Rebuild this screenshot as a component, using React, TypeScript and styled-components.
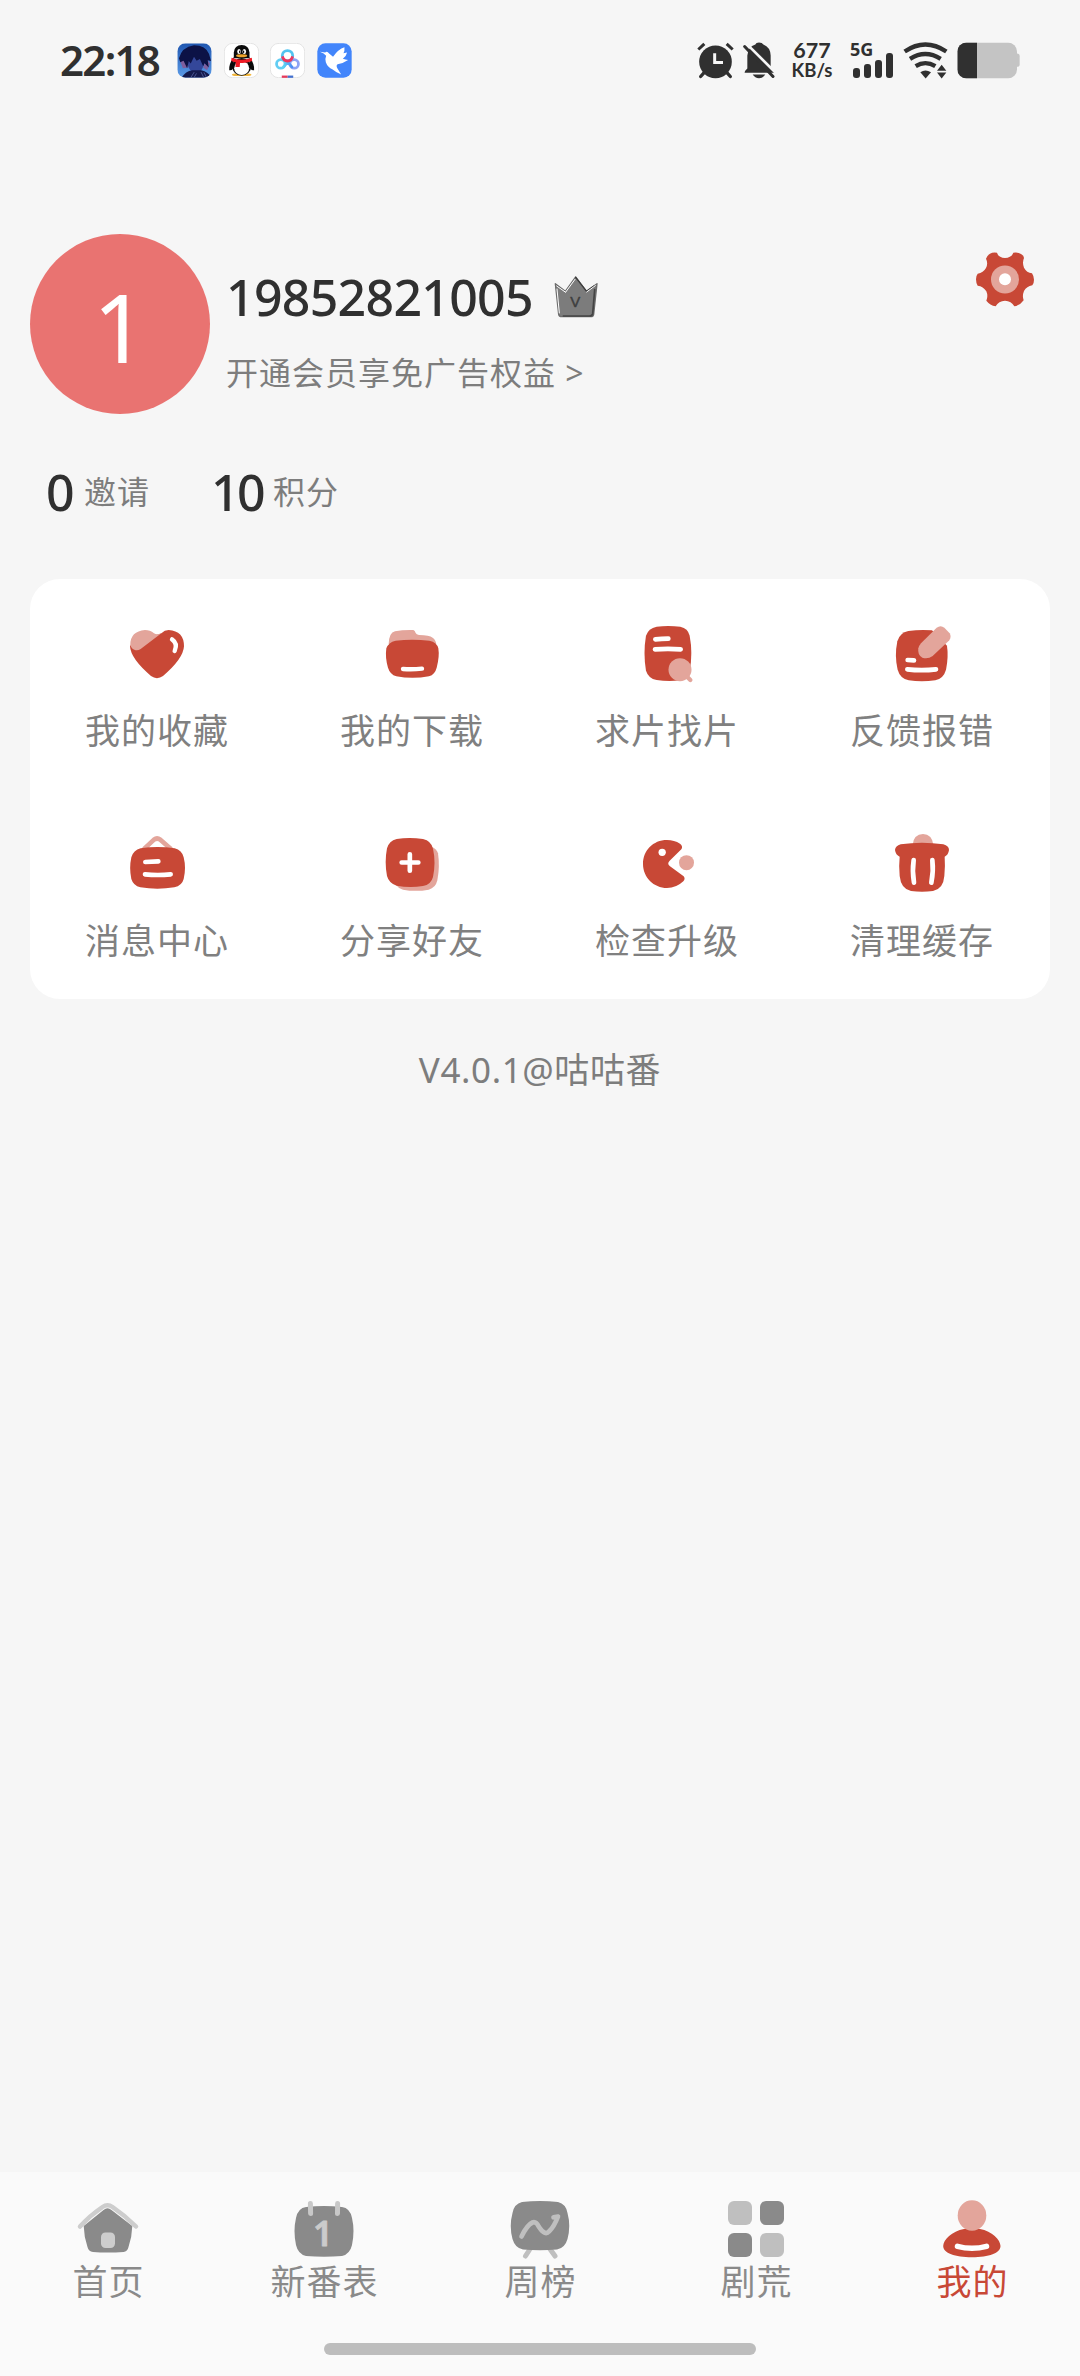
import React from "react";
import styled, { createGlobalStyle } from "styled-components";

const RED = "#c84836";
const PINK = "#e3a59b";
const INK = "#303030";
const GREY = "#7d7d7d";

const GlobalStyle = createGlobalStyle`
  * { box-sizing: border-box; }
  body {
    margin: 0;
    background: #f6f6f6;
    font-family: "Noto Sans", "Noto Sans CJK SC", sans-serif;
  }
  svg { display: block; flex: none; }
`;

const Screen = styled.div`
  width: 1080px;
  height: 2376px;
  display: flex;
  flex-direction: column;
  background: #f6f6f6;
  overflow: hidden;
`;

/* ---------- status bar ---------- */

const StatusBar = styled.header`
  height: 120px;
  padding: 0 60px;
  display: flex;
  align-items: center;
  justify-content: space-between;
  color: ${INK};
`;

const StatusSide = styled.div`
  display: flex;
  align-items: center;
`;

const Clock = styled.span`
  width: 117px;
  font-size: 42px;
  line-height: 50px;
  padding-bottom: 1px;
  font-weight: 600;
  letter-spacing: -1.7px;
  white-space: nowrap;
`;

const AppIcons = styled.div`
  display: flex;
  gap: 11.6px;
`;

const Speed = styled.div`
  width: 44px;
  margin-left: 15px;
  text-align: center;
  font-family: Lato, "Noto Sans", sans-serif;
  font-weight: 700;
  white-space: nowrap;
`;

const SpeedLine = styled.div<{ $size: number; $height: number }>`
  font-size: ${(p) => p.$size}px;
  line-height: ${(p) => p.$height}px;
`;

const Gap = styled.span<{ $w: number }>`
  width: ${(p) => p.$w}px;
  flex: none;
`;

/* ---------- profile ---------- */

const Profile = styled.section`
  height: 180px;
  margin-top: 114px;
  padding: 0 45px 0 30px;
  display: flex;
  align-items: flex-start;
`;

const Avatar = styled.div`
  width: 180px;
  height: 180px;
  border-radius: 50%;
  background: #e97371;
  color: #fff;
  font-size: 95px;
  line-height: 184px;
  text-align: center;
`;

const Identity = styled.div`
  flex: 1;
  padding: 33px 0 0 16px;
`;

const NameRow = styled.div`
  height: 60px;
  display: flex;
  align-items: center;
`;

const Name = styled.span`
  width: 326px;
  font-size: 50px;
  line-height: 60px;
  font-weight: 500;
  letter-spacing: -0.7px;
  color: ${INK};
`;

const Perk = styled.div`
  margin-top: 24px;
  font-size: 32px;
  line-height: 44px;
  letter-spacing: 1px;
  color: ${GREY};
  white-space: nowrap;
`;

const Settings = styled.div`
  margin-top: 17px;
`;

const Stats = styled.section`
  height: 165px;
  padding: 48px 0 0 46px;
  display: flex;
  align-items: flex-start;
`;

const Stat = styled.div<{ $w: number }>`
  width: ${(p) => p.$w}px;
  display: flex;
  align-items: center;
  height: 60px;
`;

const StatValue = styled.span<{ $w: number }>`
  width: ${(p) => p.$w}px;
  font-size: 50px;
  line-height: 60px;
  font-weight: 500;
  letter-spacing: -2.5px;
  color: ${INK};
`;

const StatLabel = styled.span`
  font-size: 32px;
  line-height: 44px;
  letter-spacing: 1px;
  color: ${GREY};
`;

/* ---------- menu card ---------- */

const Card = styled.section`
  margin: 0 30px;
  height: 420px;
  display: grid;
  grid-template-columns: repeat(4, 1fr);
  grid-template-rows: repeat(2, 210px);
  background: #fff;
  border-radius: 30px;
`;

const MenuItem = styled.div`
  padding: 43px 0 0 95px;
`;

const MenuLabel = styled.div`
  width: 160px;
  margin: 21px 0 0 -48px;
  text-align: center;
  font-size: 35px;
  line-height: 48px;
  letter-spacing: 1px;
  color: #808080;
  white-space: nowrap;
`;

const Version = styled.footer`
  margin-top: 46px;
  flex: 1;
  text-align: center;
  font-size: 35px;
  line-height: 50px;
  letter-spacing: 0.6px;
  color: #7d7d7d;
`;

/* ---------- bottom navigation ---------- */

const BottomNav = styled.nav`
  height: 204px;
  background: #fafafa;
  display: grid;
  grid-template-columns: repeat(5, 1fr);
  grid-template-rows: 171px 12px;
`;

const Tab = styled.div`
  padding-top: 24px;
  display: flex;
  flex-direction: column;
  align-items: center;
`;

const TabLabel = styled.span<{ $active?: boolean }>`
  margin-top: -2px;
  padding-left: 1px;
  font-size: 35px;
  line-height: 48px;
  letter-spacing: 1px;
  color: ${(p) => (p.$active ? RED : "#8a8a8a")};
`;

const HomeBar = styled.div`
  grid-column: 1 / -1;
  justify-self: center;
  width: 432px;
  height: 12px;
  border-radius: 6px;
  background: #bdbdbd;
`;

/* ---------- drawings ---------- */

type ArtProps = { box: string; w: number; h: number; children: React.ReactNode };
const Art = ({ box, w, h, children }: ArtProps) => (
  <svg width={w} height={h} viewBox={box} fill="none" strokeLinecap="round" strokeLinejoin="round">
    {children}
  </svg>
);

const PortraitApp = () => (
  <Art box="410 65 107 107" w={35} h={35}>
    <defs>
      <linearGradient id="sky" x1="0" y1="0" x2="0" y2="1">
        <stop offset="0" stopColor="#1f56b0" />
        <stop offset="1" stopColor="#5c9ce8" />
      </linearGradient>
      <clipPath id="tile"><rect x="411" y="66" width="105" height="105" rx="25" /></clipPath>
    </defs>
    <g clipPath="url(#tile)">
      <rect x="411" y="66" width="105" height="105" fill="url(#sky)" />
      <path d="M418 116 L428 142 L444 140 L440 112Z M500 112 L511 128 L502 148 L490 140Z" fill="#7f5f9e" />
      <path d="M441 112 Q440 142 457 154 L480 154 Q494 140 494 112 L460 98Z" fill="#34479a" />
      <path d="M424 171 Q436 151 457 148 L484 148 Q506 153 516 171Z" fill="#141a4d" />
      <path d="M416 112 Q424 78 462 72 Q498 72 508 99 L514 120 L504 118 L507 140 L494 127 L490 136 L480 114 L470 119 L462 107 L452 128 L446 120 L441 142 L430 119 L420 124Z" fill="#0c1246" />
      <path d="M452 171 L462 155 M462 171 L469 159 M492 171 L484 155 M501 171 L493 156" stroke="#6674b5" strokeWidth="2" />
    </g>
  </Art>
);

const PenguinApp = () => (
  <Art box="550 65 107 107" w={35} h={35}>
    <rect x="551" y="66" width="105" height="105" rx="25" fill="#fff" stroke="#e3e3e3" strokeWidth="3" />
    <ellipse cx="590" cy="162" rx="16" ry="4" fill="#f0b53c" />
    <ellipse cx="618" cy="162" rx="16" ry="4" fill="#f0b53c" />
    <path d="M580 108 Q564 130 566 148 Q574 150 580 140Z M628 108 Q644 130 642 148 Q634 150 628 140Z" fill="#0b0b0b" />
    <ellipse cx="604" cy="138" rx="29" ry="27" fill="#0b0b0b" />
    <ellipse cx="604" cy="142" rx="23" ry="21" fill="#fff" />
    <path d="M580 112 V94 Q582 71 604 71 Q626 71 628 94 V112Z" fill="#0b0b0b" />
    <ellipse cx="596" cy="91" rx="5.5" ry="8" fill="#fff" />
    <ellipse cx="612" cy="91" rx="5.5" ry="8" fill="#fff" />
    <ellipse cx="598" cy="92" rx="2" ry="4" fill="#000" />
    <ellipse cx="610" cy="92" rx="2" ry="4" fill="#000" />
    <ellipse cx="604" cy="104" rx="17" ry="4.5" fill="#efa52b" />
    <path d="M573 110 Q604 122 635 110 L636 120 Q618 128 599 126 L598 138 H585 L586 124 Q577 122 572 119Z" fill="#ef1c26" />
  </Art>
);

const CloudApp = () => (
  <Art box="690 65 107 107" w={35} h={35}>
    <defs>
      <linearGradient id="loop" x1="0" y1="0" x2="1" y2="0">
        <stop offset="0" stopColor="#5bd4f4" />
        <stop offset="1" stopColor="#4d8df3" />
      </linearGradient>
    </defs>
    <rect x="691" y="66" width="105" height="105" rx="25" fill="#fff" stroke="#e3e3e3" strokeWidth="3" />
    <circle cx="723" cy="129" r="13" stroke="#62cdf3" strokeWidth="8.5" />
    <circle cx="764" cy="129" r="13" stroke="#8da3f5" strokeWidth="8.5" />
    <path d="M731 138 L744 124 L757 138" stroke="url(#loop)" strokeWidth="8.5" />
    <circle cx="743.500" cy="104" r="16" stroke="#52c4f0" strokeWidth="8.5" />
    <path d="M728 106 Q731 120 744 120 Q756 120 759 106" stroke="#ed3860" strokeWidth="8.5" strokeLinecap="butt" />
    <path d="M726 168 H744" stroke="#e63a5b" strokeWidth="7" strokeLinecap="butt" />
    <path d="M744 168 H761" stroke="#4471cf" strokeWidth="7" strokeLinecap="butt" />
  </Art>
);

const BirdApp = () => (
  <Art box="830 65 107 107" w={35} h={35}>
    <rect x="831" y="66" width="105" height="105" rx="25" fill="#4285fb" />
    <path d="M839 92 L855 94 Q861 89 867 97 L879 107 Q895 84 914 78 Q915 90 911 96 Q919 95 922 94 Q919 107 909 113 Q917 116 925 117 Q911 127 893 130 Q887 134 893 144 L904 161 Q888 155 878 146 Q862 139 857 124 Q854 113 858 104 Q852 97 839 92Z" fill="#fff" />
  </Art>
);

const Alarm = () => (
  <Art box="54 65 111 110" w={37} h={37}>
    <circle cx="109.500" cy="124" r="49" fill={INK} />
    <path d="M58 87 L76 70 M161 87 L143 70" stroke={INK} strokeWidth="9" strokeLinecap="butt" />
    <path d="M74 158 L65 168 M145 158 L154 168" stroke={INK} strokeWidth="10" />
    <path d="M107 98 V126 H132" stroke="#f6f6f6" strokeWidth="9" strokeLinecap="butt" strokeLinejoin="miter" />
  </Art>
);

const BellOff = () => (
  <Art box="191 65 96 110" w={32} h={37}>
    <path d="M196 157 Q195 152 204 144 V105 Q206 78 228 72 Q230 66 239 66 Q249 66 252 72 Q273 80 274 105 V142 Q285 151 284 157Z" fill={INK} />
    <path d="M220 162 H258 Q251 173 239 173 Q227 173 220 162Z" fill={INK} />
    <path d="M202 70 L292 160" stroke="#f6f6f6" strokeWidth="8" />
    <path d="M196 78 L281 168" stroke={INK} strokeWidth="9" />
  </Art>
);

const SignalArea = styled.div`
  width: 43px;
  margin-left: 16px;
  height: 36px;
  display: grid;
`;

const NetType = styled.span`
  grid-area: 1 / 1;
  font-size: 18px;
  line-height: 14px;
  font-weight: 700;
`;

const SignalBars = styled.div`
  grid-area: 1 / 1;
  padding-left: 3px;
  display: flex;
  align-items: flex-end;
  gap: 4.300px;
`;

const Bar = styled.i<{ $h: number }>`
  width: 6.700px;
  height: ${(p) => p.$h}px;
  border-radius: 3px;
  background: ${INK};
`;

const Wifi = () => (
  <Art box="669 65 135 110" w={45} h={37}>
    <path d="M674 93 Q736 51 799 93" stroke={INK} strokeWidth="13" strokeLinecap="butt" />
    <path d="M690 115 Q736 86 782 115" stroke={INK} strokeWidth="13" strokeLinecap="butt" />
    <path d="M707 137 Q736 119 766 137" stroke={INK} strokeWidth="13" strokeLinecap="butt" />
    <path d="M721 155 Q736 145 753 155 L737 174Z" fill={INK} />
    <path d="M771 151 L785 133 L799 151Z M771 156 H799 L785 174Z" fill={INK} />
  </Art>
);

const Battery = () => (
  <Art box="831 65 189 110" w={63} h={37}>
    <defs><clipPath id="cell"><rect x="832" y="66" width="179" height="108" rx="27" /></clipPath></defs>
    <rect x="1000" y="99" width="19" height="40" rx="8" fill="#c4c4c4" />
    <g clipPath="url(#cell)">
      <rect x="832" y="66" width="179" height="108" fill="#c4c4c4" />
      <rect x="832" y="66" width="59" height="108" fill={INK} />
    </g>
  </Art>
);

const Crown = () => (
  <Art box="24 24 141 132" w={47} h={44}>
    <path d="M34 50 L64 73 L95 30 L127 73 L159 50 L149 142 Q148 149 140 149 H54 Q45 149 44 142Z" fill="#7c7c7c" stroke="#6c6c6c" strokeWidth="4" />
    <path d="M95 31 L128 73 L150 57" stroke="#3c3c3c" strokeWidth="4" />
    <path d="M152 68 L146 140 Q144 147 136 147 H58" stroke="#444" strokeWidth="5" />
    <path d="M66 74 L93 37 M128 75 L154 56" stroke="#fff" strokeWidth="3" />
    <path d="M38 57 L65 76 M39 66 L46 138" stroke="#fff" strokeWidth="3" />
    <text x="94" y="121" textAnchor="middle" fontFamily="Liberation Sans, sans-serif" fontSize="45" fill="#3e3e3e" stroke="#3e3e3e" strokeWidth="1.500">V</text>
  </Art>
);

const Gear = () => (
  <Art box="105 62 180 172" w={60} h={57.33}>
    <path d="M150 70 Q158 65 171 67 Q175 82 195 83 Q215 82 220 67 Q234 65 243 71 Q252 76 252 83 Q246 97 252 112 Q260 127 276 129 Q282 138 282 148 Q282 159 277 165 Q260 168 252 182 Q246 197 251 210 Q242 224 223 228 Q214 212 195 211 Q176 212 167 228 Q150 225 139 211 Q145 197 139 183 Q130 168 113 166 Q108 158 108 147 Q108 136 113 130 Q130 127 138 113 Q145 99 138 85 Q141 76 150 70Z" fill={RED} />
    <circle cx="195" cy="147.500" r="42" fill={PINK} />
    <circle cx="195" cy="147" r="18" fill="#fff" />
  </Art>
);

const Heart = () => (
  <Art box="315 156 195 192" w={65} h={64}>
    <path d="M424 190 Q434 180 446 180 Q492 183 492 229 Q490 266 429 318 Q411 331 393 318 Q332 266 330 229 L334 222Z" fill={RED} />
    <path d="M331 224 Q331 184 375 180 Q390 180 402 190 Q411 196 424 190 L362 237 Q352 243 343 239 Q333 235 331 224Z" fill={PINK} />
    <path d="M456 208 Q474 220 464 243" stroke="#fff" strokeWidth="13" />
  </Art>
);

const Folder = () => (
  <Art box="1080 156 195 192" w={65} h={64}>
    <path d="M1106 222 Q1107 188 1125 184 Q1150 179 1180 180 Q1185 182 1187 189 Q1189 194 1197 195 Q1228 196 1238 203 Q1248 210 1249 224Z" fill={PINK} />
    <path d="M1127 212 Q1176 206 1228 212 Q1251 217 1255 235 Q1259 260 1250 293 Q1245 313 1227 319 Q1177 328 1129 319 Q1110 313 1104 293 Q1095 263 1099 235 Q1105 217 1127 212Z" fill={RED} />
    <path d="M1149 297 Q1177 299 1206 296" stroke="#fff" strokeWidth="13" />
  </Art>
);

const FindDoc = () => (
  <Art box="285 156 195 192" w={65} h={64}>
    <path d="M350 170 Q384 166 421 170 Q444 175 449 197 Q459 250 449 303 Q444 326 421 331 Q384 335 350 330 Q325 325 318 302 Q309 250 318 197 Q325 175 350 170Z" fill={RED} />
    <circle cx="420" cy="299" r="34.500" fill={PINK} />
    <path d="M443 322 L451 330" stroke={PINK} strokeWidth="13" />
    <path d="M346 208 Q365 206 385 206 M345 238 Q384 235 422 238" stroke="#fff" strokeWidth="14" />
  </Art>
);

const EditNote = () => (
  <Art box="1050 156 195 192" w={65} h={64}>
    <path d="M1105 183 Q1140 178 1176 181 L1221 227 Q1226 260 1218 299 Q1211 325 1186 331 Q1145 337 1106 331 Q1080 325 1073 299 Q1063 258 1072 214 Q1079 188 1105 183Z" fill={RED} />
    <path d="M1190 173 Q1202 164 1213 173 L1229 190 Q1235 200 1228 211 L1178 258 Q1164 268 1147 263 Q1132 255 1135 235 Q1137 227 1143 220Z" fill={PINK} />
    <path d="M1103 270 L1122 271 M1102 298 Q1145 303 1188 298" stroke="#fff" strokeWidth="14" />
  </Art>
);

const Message = () => (
  <Art box="315 66 195 192" w={65} h={64}>
    <path d="M373 116 L402 89 Q411 82 421 89 L452 116" stroke={PINK} strokeWidth="14" />
    <path d="M362 115 Q412 107 464 115 Q486 121 491 142 Q499 174 491 207 Q486 227 463 232 Q412 240 361 232 Q340 227 334 207 Q327 174 334 142 Q340 121 362 115Z" fill={RED} />
    <path d="M376 156 L415 154 M375 193 Q413 197 452 193" stroke="#fff" strokeWidth="14" />
  </Art>
);

const Share = () => (
  <Art box="1080 66 195 192" w={65} h={64}>
    <path d="M1235 110 Q1250 116 1254 130 Q1260 170 1252 211 Q1247 234 1226 239 Q1187 246 1149 239 Q1136 236 1128 225Z" fill={PINK} />
    <path d="M1130 87 Q1168 81 1209 87 Q1234 93 1239 116 Q1248 157 1239 201 Q1233 224 1209 228 Q1168 234 1130 227 Q1107 220 1101 198 Q1093 157 1101 115 Q1107 93 1130 87Z" fill={RED} />
    <path d="M1145 157.500 H1195 M1169.500 133 V182" stroke="#fff" strokeWidth="14" />
  </Art>
);

const Upgrade = () => (
  <Art box="285 66 195 192" w={65} h={64}>
    <path d="M420 101 Q403 90 381 90 C339 90 309 122 309 162 C309 202 341 234 381 234 Q409 234 430 214 Q437 206 431 199 L390 169 Q380 161 389 152 L424 118 Q430 109 420 101Z" fill={RED} />
    <circle cx="366.500" cy="127" r="11" fill="#fff" />
    <circle cx="439.500" cy="158" r="22.500" fill={PINK} />
  </Art>
);

const Trash = () => (
  <Art box="1050 66 195 192" w={65} h={64}>
    <path d="M1118 104 Q1121 73 1149 72 Q1176 73 1180 104Z" fill={PINK} />
    <path d="M1082 103 Q1146 94 1210 103 Q1227 108 1227 120 Q1225 135 1214 140 Q1216 168 1213 198 Q1210 237 1179 243 Q1146 247 1113 243 Q1083 237 1079 198 Q1076 168 1079 140 Q1067 135 1065 120 Q1066 108 1082 103Z" fill={RED} />
    <path d="M1121 150 Q1116 184 1122 218 M1177 150 Q1181 184 1174 218" stroke="#fff" strokeWidth="14" />
  </Art>
);

const Home = () => (
  <Art box="0 0 66 64" w={66} h={64}>
    <path d="M28.500 14 Q32.500 10.500 36.500 14 L57.300 30 Q57 41 53.500 51 Q52.500 55.500 48.500 56 Q32.500 57 18 56 Q13.500 55.500 12.500 51 Q9 41 8.700 30Z" fill="#8a8a8a" />
    <path d="M5 30.500 Q15 19.500 27.500 11 Q32.500 7.500 37.500 11 Q50 19.500 61 30.500" stroke="#cdcdcd" strokeWidth="4.500" />
    <rect x="26" y="36.500" width="14" height="15.500" rx="4.500" fill="#cdcdcd" />
  </Art>
);

const Calendar = () => (
  <Art box="0 0 66 64" w={66} h={64}>
    <path d="M15 11 Q33 9 51 11 Q59 12 61 22 Q64 35 61 49 Q59 58 51 60 Q33 61.500 15 60 Q7 58 5 49 Q2 35 5 22 Q7 12 15 11Z" fill="#8a8a8a" />
    <path d="M19.400 7.500 L19.600 17.500 M46.600 7.500 L46.500 17.500" stroke="#c8c8c8" strokeWidth="5" />
    <text x="32" y="49.500" textAnchor="middle" fontSize="35" fontWeight="600" fill="#cbcbcb" stroke="#cbcbcb" strokeWidth="0.800">1</text>
  </Art>
);

const Board = () => (
  <Art box="0 0 66 64" w={66} h={64}>
    <path d="M23 53 L18.500 60 M43 53 L48 60" stroke="#bfbfbf" strokeWidth="5" />
    <path d="M15 6 Q33 4 51 6 Q59 8 60.500 17 Q64 30 60.500 43 Q58 52 50 53.500 Q33 55 16 53.500 Q8 52 5.500 43 Q2 30 5.500 17 Q7 8 15 6Z" fill="#8a8a8a" />
    <path d="M14.500 40.500 Q20 29 25.500 26.500 Q29 25 32 31 Q38 40 42 35.500 Q47 31 51 20.500 L46.500 21.300" stroke="#bfbfbf" strokeWidth="4.700" />
  </Art>
);

const GridIcon = () => (
  <Art box="0 0 66 64" w={66} h={64}>
    <rect x="5" y="5" width="24" height="24" rx="6" fill="#bfbfbf" />
    <rect x="37" y="5" width="24" height="24" rx="6" fill="#8a8a8a" />
    <rect x="5" y="37" width="24" height="24" rx="6" fill="#8a8a8a" />
    <rect x="37" y="37" width="24" height="24" rx="6" fill="#bfbfbf" />
  </Art>
);

const Person = () => (
  <Art box="0 0 66 64" w={66} h={64}>
    <path d="M25 33 Q33 31.500 41 33 C53 35 61.500 44 61.500 50 C61.500 57 50 61.300 33 61.300 C16 61.300 4.200 57 4.200 50 C4.200 44 13 35 25 33Z" fill={RED} />
    <ellipse cx="33" cy="19.500" rx="14.300" ry="15.200" fill={PINK} />
    <path d="M18.500 50.300 Q33 54.300 47.500 50.300" stroke="#fff" strokeWidth="5.500" />
  </Art>
);

const menu: [string, React.FC][] = [
  ["我的收藏", Heart],
  ["我的下载", Folder],
  ["求片找片", FindDoc],
  ["反馈报错", EditNote],
  ["消息中心", Message],
  ["分享好友", Share],
  ["检查升级", Upgrade],
  ["清理缓存", Trash],
];

const tabs: [string, React.FC][] = [
  ["首页", Home],
  ["新番表", Calendar],
  ["周榜", Board],
  ["剧荒", GridIcon],
  ["我的", Person],
];

export default function App() {
  return (
    <>
      <GlobalStyle />
      <Screen>
        <StatusBar>
          <StatusSide>
            <Clock>22:18</Clock>
            <AppIcons>
              <PortraitApp />
              <PenguinApp />
              <CloudApp />
              <BirdApp />
            </AppIcons>
          </StatusSide>
          <StatusSide>
            <Alarm />
            <Gap $w={9} />
            <BellOff />
            <Speed>
              <SpeedLine $size={21.5} $height={19}>677</SpeedLine>
              <SpeedLine $size={18.5} $height={20}>KB/s</SpeedLine>
            </Speed>
            <SignalArea>
              <NetType>5G</NetType>
              <SignalBars>
                <Bar $h={10} />
                <Bar $h={14} />
                <Bar $h={18} />
                <Bar $h={25} />
              </SignalBars>
            </SignalArea>
            <Gap $w={10} />
            <Wifi />
            <Gap $w={9} />
            <Battery />
          </StatusSide>
        </StatusBar>

        <Profile>
          <Avatar>1</Avatar>
          <Identity>
            <NameRow>
              <Name>19852821005</Name>
              <Crown />
            </NameRow>
            <Perk>开通会员享免广告权益 &gt;</Perk>
          </Identity>
          <Settings><Gear /></Settings>
        </Profile>

        <Stats>
          <Stat $w={165}>
            <StatValue $w={38}>0</StatValue>
            <StatLabel>邀请</StatLabel>
          </Stat>
          <Stat $w={165}>
            <StatValue $w={62}>10</StatValue>
            <StatLabel>积分</StatLabel>
          </Stat>
        </Stats>

        <Card>
          {menu.map(([label, Icon]) => (
            <MenuItem key={label}>
              <Icon />
              <MenuLabel>{label}</MenuLabel>
            </MenuItem>
          ))}
        </Card>

        <Version>V4.0.1@咕咕番</Version>

        <BottomNav>
          {tabs.map(([label, Icon]) => (
            <Tab key={label}>
              <Icon />
              <TabLabel $active={label === "我的"}>{label}</TabLabel>
            </Tab>
          ))}
          <HomeBar />
        </BottomNav>
      </Screen>
    </>
  );
}
